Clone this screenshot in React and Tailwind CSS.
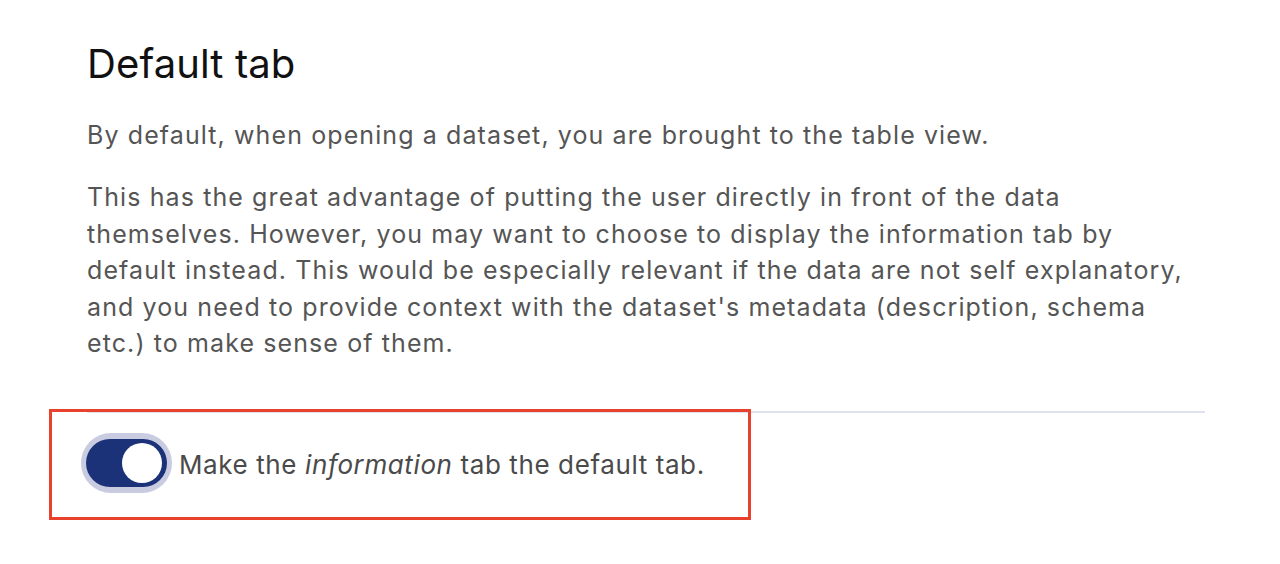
export default function App() {
  return (
    <div className="relative min-h-[564px] w-[1280px] bg-white" style={{ fontFamily: 'Inter, "Liberation Sans", sans-serif' }}>
      <div className="w-[1205px] pl-[87px] pt-[40px]">
        <h1 className="text-[40px] leading-[48px] font-normal text-[#111111] tracking-[0.1px]">Default tab</h1>
        <p className="mt-[29px] text-[25px] leading-[36px] tracking-[1.1px] text-[#555555]">
          By default, when opening a dataset, you are brought to the table view.
        </p>
        <p className="mt-[26px] text-[25px] leading-[36.6px] tracking-[1.1px] text-[#555555]">
          This has the great advantage of putting the user directly in front of the data themselves. However, you may want to choose to display the information tab by default instead. This would be especially relevant if the data are not self explanatory, and you need to provide context with the dataset's metadata (description, schema etc.) to make sense of them.
        </p>
        <div className="mt-[49px] h-[2px] bg-[#dfe2ee]" />
        <div className="mt-[20px] flex items-center gap-[7px] -ml-[6px]">
          <div className="flex h-[60px] w-[91px] shrink-0 items-center rounded-full bg-[#c9cce0] px-[5px] py-[6px]">
            <div className="flex h-[48px] w-full items-center justify-end rounded-full bg-[#1b3178] pr-[5px]">
              <div className="h-[40px] w-[40px] rounded-full bg-white" />
            </div>
          </div>
          <span className="mt-[4px] text-[26px] leading-[36px] tracking-[0.6px] text-[#4a4a4a]">
            Make the <em className="italic">information</em> tab the default tab.
          </span>
        </div>
      </div>
      <div className="absolute left-[49px] top-[409px] h-[111px] w-[702px] border-[3px] border-[#e8412c]" />
    </div>
  );
}
